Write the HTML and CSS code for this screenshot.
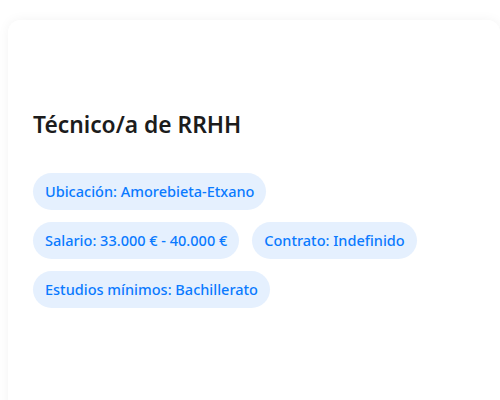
FILE: index.html
```html
<!DOCTYPE html>
<html lang="es">
<head>
<meta charset="utf-8">
<link rel="stylesheet" href="styles.css">
</head>
<body>
<div class="page">
  <div class="card">
    <h2 class="title">Técnico/a de RRHH</h2>
    <div class="tags">
      <div class="row">
        <span class="tag">Ubicación: Amorebieta-Etxano</span>
      </div>
      <div class="row">
        <span class="tag">Salario: 33.000 € - 40.000 €</span>
        <span class="tag">Contrato: Indefinido</span>
      </div>
      <div class="row">
        <span class="tag">Estudios mínimos: Bachillerato</span>
      </div>
    </div>
  </div>
</div>
</body>
</html>
```
FILE: styles.css
```css
html, body {
  margin: 0;
  padding: 0;
  background: #ffffff;
}
body {
  font-family: "Noto Sans", "Liberation Sans", sans-serif;
  overflow: hidden;
  height: 400px;
}
.page {
  padding: 20px 0 0 8px;
  height: 400px;
  box-sizing: border-box;
  overflow: hidden;
}
.card {
  box-sizing: border-box;
  background: #fff;
  border-radius: 12px;
  box-shadow: 0 0 12px rgba(0, 0, 0, 0.05);
  padding: 89px 25px 0 25px;
  height: 420px;
}
.title {
  margin: 0 0 32px 0;
  font-size: 22.8px;
  font-weight: 600;
  color: #1c1c1c;
  line-height: 32px;
}
.tags {
  display: flex;
  flex-direction: column;
  gap: 12px;
}
.row {
  display: flex;
  gap: 13px;
}
.tag {
  background: #e5f0fe;
  color: #0a7aff;
  font-size: 14.5px;
  font-weight: 500;
  padding: 0 12px;
  height: 37px;
  line-height: 37px;
  border-radius: 19px;
  white-space: nowrap;
}
```
